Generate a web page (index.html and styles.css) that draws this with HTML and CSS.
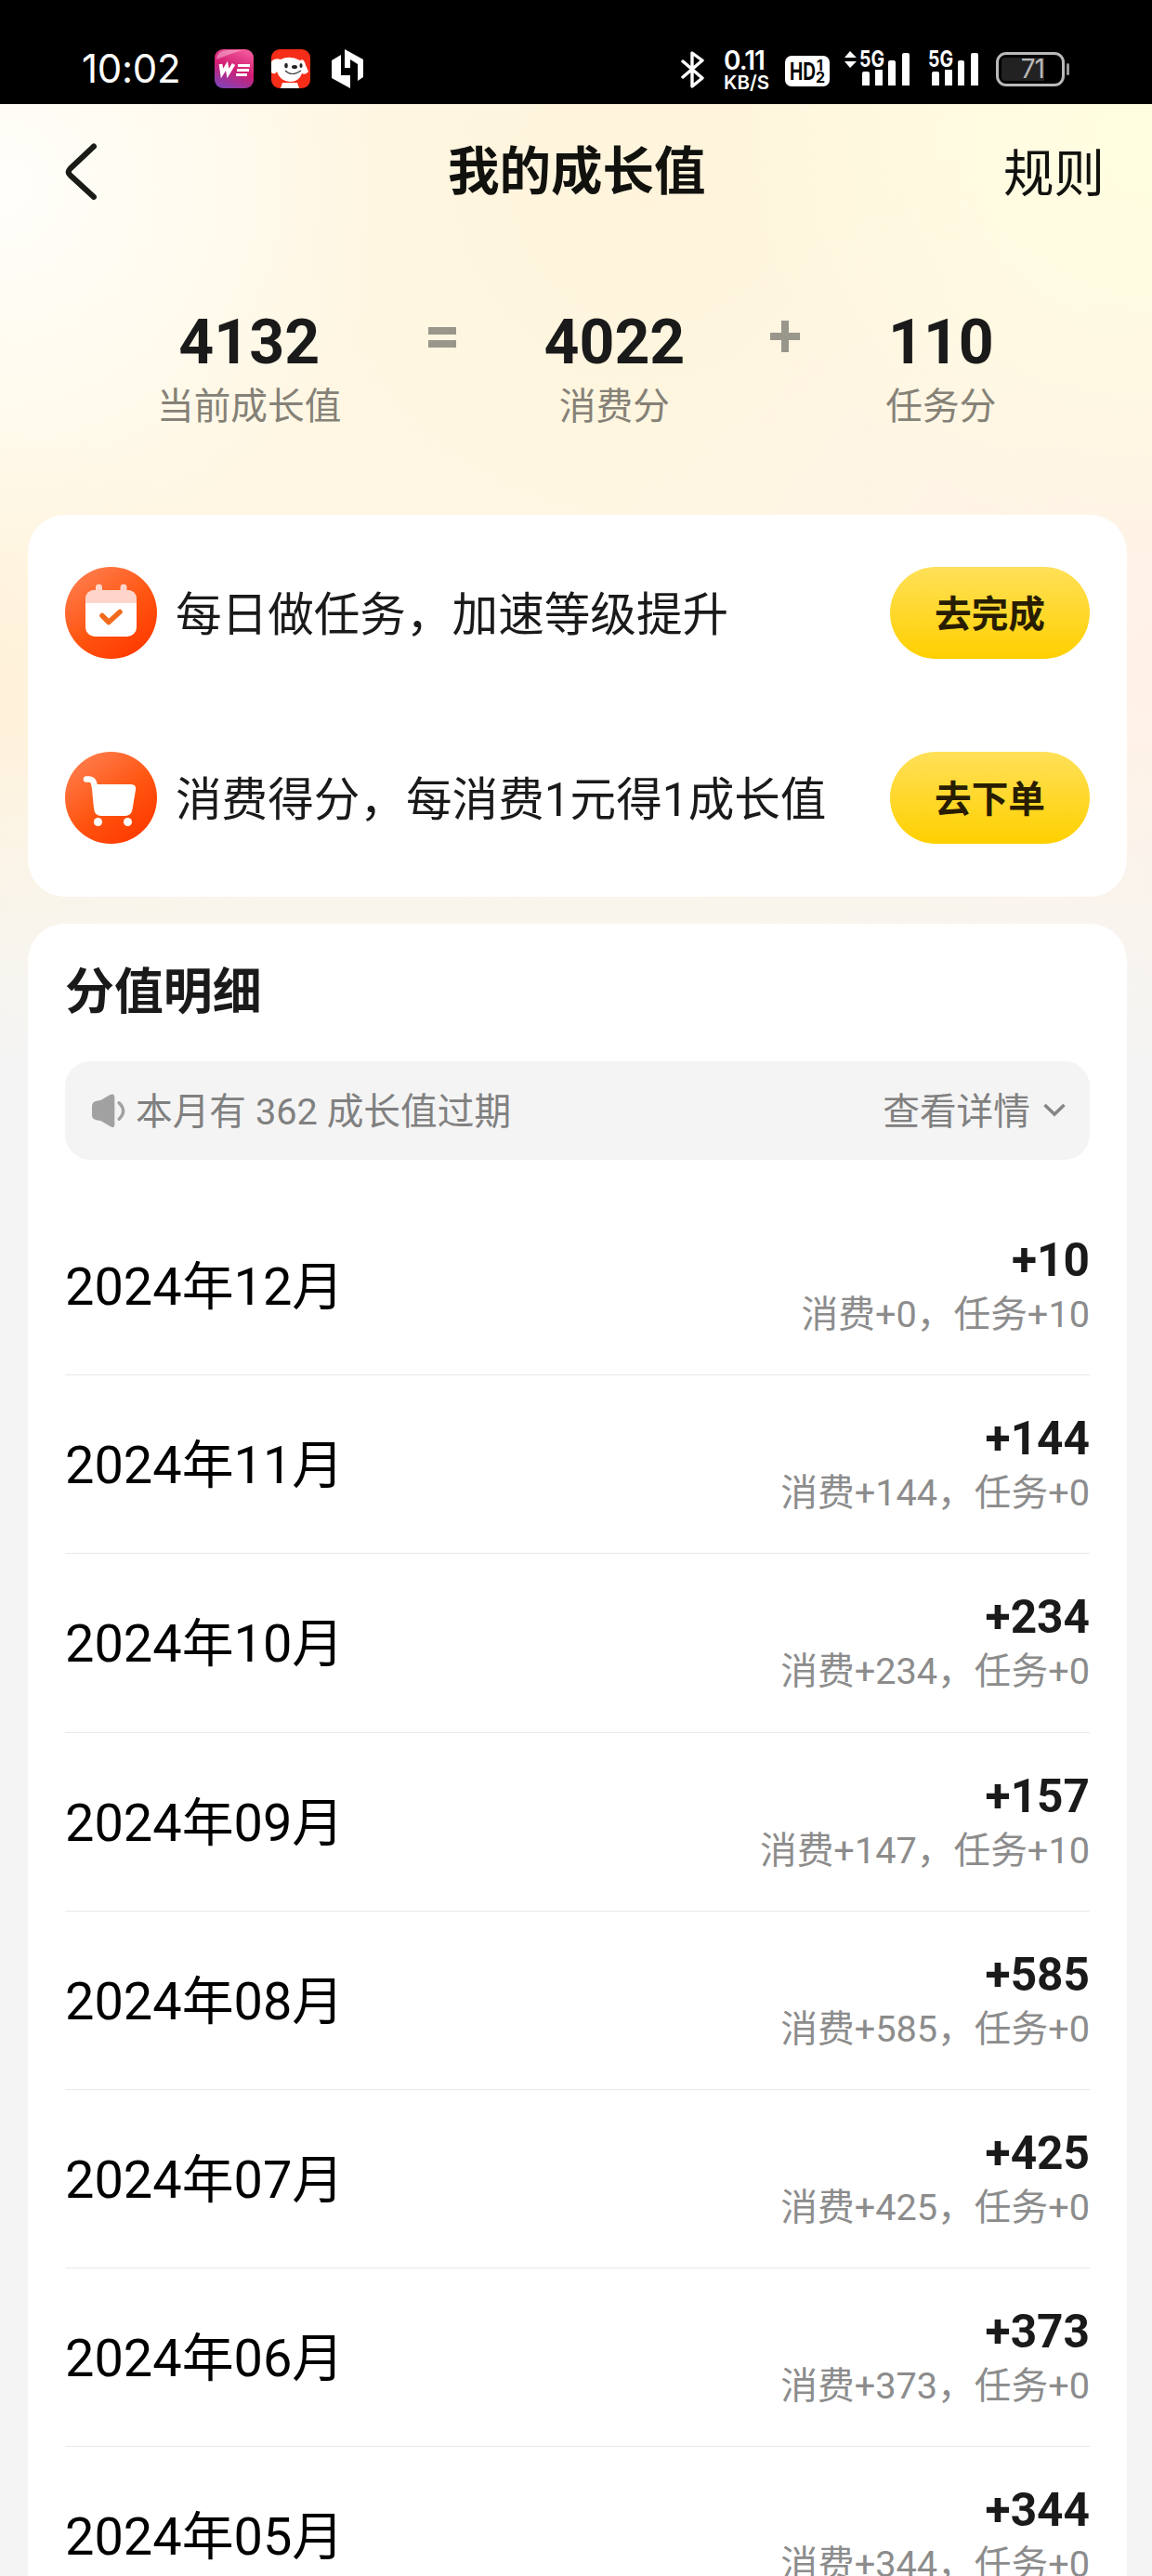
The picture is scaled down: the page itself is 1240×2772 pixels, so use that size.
FILE: index.html
```html
<!DOCTYPE html>
<html lang="zh-CN">
<head>
<meta charset="utf-8">
<title>我的成长值</title>
<link rel="stylesheet" href="styles.css">
</head>
<body>
<div class="screen">
  <header class="status">
    <div class="status-left">
      <span class="clock">10:02</span>
      <svg class="app" viewBox="0 0 42 42"><defs><linearGradient id="we" x1="0.7" y1="0" x2="0.3" y2="1"><stop offset="0" stop-color="#f2589b"/><stop offset=".5" stop-color="#d21d72"/><stop offset="1" stop-color="#8441b4"/></linearGradient></defs><rect width="42" height="42" rx="9" fill="url(#we)"/><path d="M2 11Q3 1 14 1h16Q16 5 2 11z" fill="#fff" opacity=".35"/><path d="M6.500 16l1.500 10 5-8 1.500 8 6-10" fill="none" stroke="#fff" stroke-width="3.800"/><path d="M25 17.500H38M24 22.500H37M23 27.500H35" stroke="#fff" stroke-width="2.800"/></svg>
      <svg class="app" viewBox="0 0 42 42"><defs><clipPath id="dogclip"><rect width="42" height="42" rx="9"/></clipPath></defs><g clip-path="url(#dogclip)"><rect width="42" height="42" fill="#f52d19"/><path d="M0 13Q4 9 10 11Q20 6 31 12Q35 9 37 17L40 24Q37 28 33 26Q30 35 20 35Q9 34 6 24Q4 28 0 25z" fill="#fff"/><path d="M12 36h16l2 6H10z" fill="#fff"/><ellipse cx="16" cy="17.500" rx="1.800" ry="2.800" fill="#222"/><ellipse cx="32" cy="17.500" rx="1.500" ry="2.500" fill="#222"/><ellipse cx="25" cy="19" rx="3" ry="2" fill="#222"/><path d="M15 23Q22 30 32 23" stroke="#444" fill="none" stroke-width="1.200"/></g></svg>
      <svg class="hex" viewBox="0 0 34 42"><path d="M10 6v22h10v14L0 31V12zM14 0l20 11v19l-6 4V16l-8-5v9h-6z" fill="#fff"/></svg>
    </div>
    <div class="status-right">
      <svg class="bt" viewBox="0 0 26 40"><path d="M2 11l21 18-11 9V2l11 8L2 28" fill="none" stroke="#fff" stroke-width="3.400" stroke-linejoin="round" stroke-linecap="round"/></svg>
      <div class="speed"><b>0.11</b><span>KB/S</span></div>
      <svg class="hd" viewBox="0 0 48 33"><rect width="48" height="33" rx="7" fill="#fff"/><text class="hd-main" x="5" y="26" textLength="28" lengthAdjust="spacingAndGlyphs">HD</text><text class="hd-num" x="34" y="16">1</text><text class="hd-num" x="33" y="29">2</text></svg>
      <div class="net net-a"><svg viewBox="0 0 70 38"><path d="M0 8L6 1l7 7zM0 12h13l-7 7z" fill="#fff"/><path d="M19 25q0-2 2-2h4q2 0 2 2v13h-8zM33 21h8v17h-8zM47 13q0-2 2-2h4q2 0 2 2v25h-8zM62 5q0-2 2-2h4q2 0 2 2v33h-8z" fill="#fff"/><text class="gen" x="16" y="18" textLength="27" lengthAdjust="spacingAndGlyphs">5G</text></svg></div>
      <div class="net net-b"><svg viewBox="0 0 54 38"><path d="M4 25q0-2 2-2h4q2 0 2 2v13H4zM18 21h8v17h-8zM32 13q0-2 2-2h3q2 0 2 2v25h-7zM46 5q0-2 2-2h4q2 0 2 2v33h-8z" fill="#fff"/><text class="gen" x="0" y="18" textLength="27" lengthAdjust="spacingAndGlyphs">5G</text></svg></div>
      <div class="battery"><span>71</span></div>
    </div>
  </header>

  <nav class="nav">
    <svg class="back" viewBox="0 0 34 62"><path d="M31 3.500L5.500 27.500Q2 31 5.500 34.500L31 58" fill="none" stroke="#1a1a16" stroke-width="6" stroke-linecap="round"/></svg>
    <h1>我的成长值</h1>
    <a class="rules">规则</a>
  </nav>

  <section class="summary">
    <div class="stat s1"><strong>4132</strong><span>当前成长值</span></div>
    <svg class="op eq" viewBox="0 0 30 22"><path d="M0 0h30v8H0zM0 14h30v8H0z" fill="#99968c"/></svg>
    <div class="stat s2"><strong>4022</strong><span>消费分</span></div>
    <svg class="op plus" viewBox="0 0 32 34"><path d="M12 0h8v13h12v8H20v13h-8V21H0v-8h12z" fill="#99968c"/></svg>
    <div class="stat s3"><strong>110</strong><span>任务分</span></div>
  </section>

  <section class="card tasks">
    <div class="task">
      <svg class="task-icon" viewBox="0 0 99 99"><defs><linearGradient id="or" x1=".15" y1=".1" x2=".75" y2=".95"><stop offset="0" stop-color="#ff7a49"/><stop offset=".55" stop-color="#ff5510"/><stop offset="1" stop-color="#ff3c00"/></linearGradient></defs><circle cx="49.500" cy="49.500" r="49.500" fill="url(#or)"/><path d="M36.500 22v10M63 22v10" stroke="#ffd5ca" stroke-width="7" stroke-linecap="round"/><rect x="22" y="25" width="55" height="50" rx="10" fill="#fff"/><path d="M22 39v-4q0-10 10-10h35q10 0 10 10v4z" fill="#ffd5ca"/><path d="M40 52.500l7 7L59 48.500" fill="none" stroke="#f26a1b" stroke-width="5.500" stroke-linecap="round" stroke-linejoin="round"/></svg>
      <p>每日做任务，加速等级提升</p>
      <button>去完成</button>
    </div>
    <div class="task">
      <svg class="task-icon" viewBox="0 0 99 99"><circle cx="49.500" cy="49.500" r="49.500" fill="url(#or)"/><path d="M23 29.500h3q5 0 6 8" fill="none" stroke="#fff" stroke-width="6.500" stroke-linecap="round"/><path d="M28.500 35H71q6 0 5 6L72.500 62q-1 7-8 7H39q-7 0-8-8z" fill="#fff"/><circle cx="35.500" cy="75.500" r="4.500" fill="#fff"/><circle cx="67.500" cy="75.500" r="4.500" fill="#fff"/></svg>
      <p>消费得分，每消费1元得1成长值</p>
      <button>去下单</button>
    </div>
  </section>

  <section class="card detail">
    <h2>分值明细</h2>
    <div class="notice">
      <svg class="horn" viewBox="0 0 37 36"><path d="M0 13q0-5 5-6l5-1L20 0q5-2 5 3v30q0 5-5 2l-10-6-5-1q-5-1-5-6z" fill="#a1a1a1"/><path d="M30 9q9 9 0 18" fill="none" stroke="#a1a1a1" stroke-width="3.500" stroke-linecap="round"/></svg>
      <span>本月有 362 成长值过期</span>
      <span class="more">查看详情</span>
      <svg class="chev" viewBox="0 0 24 14"><path d="M1.500 1L12 11 22.500 1" fill="none" stroke="#868686" stroke-width="3.500"/></svg>
    </div>
    <ul class="months">
      <li><span class="month">2024年12月</span><div class="score"><b>+10</b><span>消费+0，任务+10</span></div></li>
      <li><span class="month">2024年11月</span><div class="score"><b>+144</b><span>消费+144，任务+0</span></div></li>
      <li><span class="month">2024年10月</span><div class="score"><b>+234</b><span>消费+234，任务+0</span></div></li>
      <li><span class="month">2024年09月</span><div class="score"><b>+157</b><span>消费+147，任务+10</span></div></li>
      <li><span class="month">2024年08月</span><div class="score"><b>+585</b><span>消费+585，任务+0</span></div></li>
      <li><span class="month">2024年07月</span><div class="score"><b>+425</b><span>消费+425，任务+0</span></div></li>
      <li><span class="month">2024年06月</span><div class="score"><b>+373</b><span>消费+373，任务+0</span></div></li>
      <li><span class="month">2024年05月</span><div class="score"><b>+344</b><span>消费+344，任务+0</span></div></li>
    </ul>
  </section>
</div>
</body>
</html>
```
FILE: styles.css
```css
* { box-sizing: border-box; margin: 0; padding: 0; }
body { background: #f4f4f4; }
svg { display: block; flex: none; }
.screen {
  width: 1240px; height: 2772px; overflow: hidden;
  font-family: Roboto, "Noto Sans CJK SC", sans-serif;
  color: #1a1a1a;
  display: flex; flex-direction: column;
  background:
    linear-gradient(180deg, rgba(244,244,244,0) 780px, #f4f4f4 1150px),
    radial-gradient(circle 420px at 0 200px, #fffefa, rgba(255,254,250,0)),
    radial-gradient(circle 450px at 1240px 150px, #fffee0, rgba(255,254,224,0)),
    radial-gradient(circle 600px at 1240px 720px, #fff1e7, rgba(255,241,231,0)),
    radial-gradient(circle 300px at 0 760px, #fff1da, rgba(255,241,218,0)),
    radial-gradient(circle 400px at 700px 200px, #fff4db, rgba(255,244,219,0)),
    #fff7e3;
}
.status {
  flex: none; height: 112px; background: #000; color: #fff;
  display: flex; justify-content: space-between; padding: 52px 91px 0 88px;
}
.status-left, .status-right { display: flex; align-items: flex-start; }
.clock { font: 400 42px/44px Inter, sans-serif; width: 143px; white-space: nowrap; letter-spacing: -.3px; }
.app { width: 42px; height: 42px; margin: 1px 19px 0 0; }
.hex { width: 34px; height: 42px; margin: 1px 0 0 4px; }
.bt { width: 26px; height: 40px; margin-right: 20px; margin-top: 3px; }
.speed { width: 50px; margin-right: 16px; font-family: Inter, sans-serif; white-space: nowrap; }
.speed b { display: block; font-size: 28px; line-height: 26px; font-weight: 600; letter-spacing: -1px; }
.speed span { display: block; font-size: 20.500px; line-height: 21px; font-weight: 600; }
.hd { width: 48px; height: 33px; margin: 8px 16px 0 0; }
.hd-main { font: 700 26px Inter, sans-serif; }
.hd-num { font: 700 16px Inter, sans-serif; }
.gen { font: 700 24px Inter, sans-serif; fill: #fff; stroke: #000; stroke-width: 2px; paint-order: stroke; }
.net { height: 38px; margin-top: 2px; }
.net svg { height: 38px; overflow: visible; }
.net-a { width: 70px; margin-right: 20px; }
.net-b { width: 54px; margin-right: 19px; }
.battery { position: relative; width: 74px; height: 37px; border: 3px solid #b9b9b9; border-radius: 11px; margin-top: 4px; padding: 3px; margin-right: 3px; }
.battery span { display: block; width: 46px; height: 25px; background: #222; border-radius: 4px 0 0 4px; color: #b9b9b9; font: 400 28px/25px Inter, sans-serif; text-align: right; letter-spacing: -1px; }
.battery::after { content: ""; position: absolute; right: -8px; top: 9px; width: 3px; height: 13px; background: #999; border-radius: 2px; }

.nav { flex: none; height: 147px; display: flex; align-items: center; padding: 0 51px 0 70px; color: #11110e; }
.back { width: 34px; height: 62px; margin-top: -2px; }
.nav h1 { font-size: 55.500px; line-height: 80px; width: 278px; margin-left: 378px; white-space: nowrap; }
.rules { font-size: 54.500px; line-height: 80px; margin-left: auto; padding-top: 3px; }

.summary { flex: none; height: 295px; display: flex; align-items: flex-start; padding: 68px 0 0 169px; }
.stat { text-align: center; white-space: nowrap; }
.stat strong { display: block; font-size: 66.200px; line-height: 84px; }
.stat span { display: block; font-size: 39.700px; line-height: 54px; color: #858177; }
.eq { width: 30px; height: 22px; margin: 25px 94px 0; }
.plus { width: 32px; height: 34px; margin: 18px 92px 0; }

.card { flex: none; width: 1183px; margin-left: 30px; background: #fff; border-radius: 40px; padding: 0 40px; }
.tasks { height: 411px; padding-top: 56px; display: flex; flex-direction: column; gap: 100px; }
.task { display: flex; align-items: center; height: 99px; }
.task-icon { width: 99px; height: 99px; }
.task p { margin-left: 20px; padding-top: 4px; font-size: 49.600px; line-height: 70px; white-space: nowrap; }
.task button { margin-left: auto; width: 215px; height: 99px; border: 0; border-radius: 50px; background: linear-gradient(180deg, #ffe058, #ffd000); color: #281d00; padding-top: 4px; font: 700 39.700px/60px Roboto, "Noto Sans CJK SC", sans-serif; }

.detail { height: 1820px; margin-top: 29px; padding-top: 36px; }
.detail h2 { font-size: 52.900px; line-height: 76px; }
.notice { margin-top: 36px; height: 106px; border-radius: 27px; background: #f4f4f4; color: #808080; font-size: 39.700px; line-height: 58px; display: flex; align-items: center; padding: 0 26px 0 29px; }
.notice span { padding-top: 3px; }
.horn { width: 36px; height: 37px; margin-right: 11px; }
.more { margin-left: auto; }
.chev { width: 24px; height: 14px; margin-left: 14px; }
.months { list-style: none; margin-top: 40px; }
.months li { height: 192.200px; padding-top: 3px; border-bottom: 1px solid #e9e9e9; display: flex; justify-content: space-between; align-items: center; }
.month { font-size: 55.900px; line-height: 80px; color: #000; }
.score { text-align: right; }
.score b { display: block; font-size: 49.600px; line-height: 60px; }
.score span { display: block; font-size: 39.700px; line-height: 58px; color: #8c8c8c; }
```
